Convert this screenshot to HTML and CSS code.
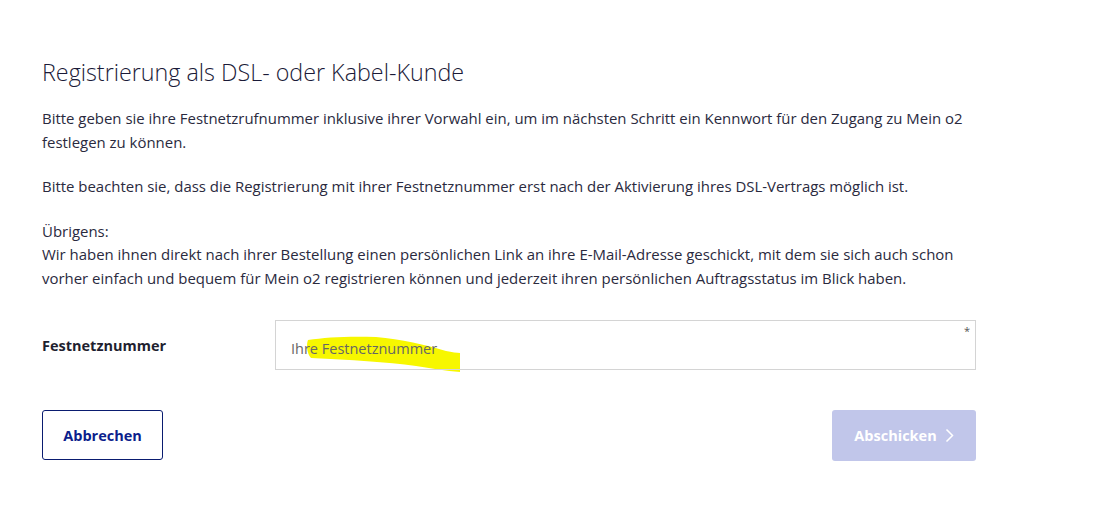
FILE: index.html
```html
<!DOCTYPE html>
<html lang="de">
<head>
<meta charset="utf-8">
<title>Registrierung</title>
<link rel="stylesheet" href="styles.css">
</head>
<body>
<main class="page">
  <h1 class="title">Registrierung als DSL- oder Kabel-Kunde</h1>
  <p class="text">Bitte geben sie ihre Festnetzrufnummer inklusive ihrer Vorwahl ein, um im nächsten Schritt ein Kennwort für den Zugang zu Mein o2 festlegen zu können.</p>
  <p class="text">Bitte beachten sie, dass die Registrierung mit ihrer Festnetznummer erst nach der Aktivierung ihres DSL-Vertrags möglich ist.</p>
  <p class="text">Übrigens:<br>Wir haben ihnen direkt nach ihrer Bestellung einen persönlichen Link an ihre E-Mail-Adresse geschickt, mit dem sie sich auch schon vorher einfach und bequem für Mein o2 registrieren können und jederzeit ihren persönlichen Auftragsstatus im Blick haben.</p>

  <div class="field">
    <label class="label" for="nr">Festnetznummer</label>
    <div class="input-wrap">
      <svg class="marker" width="156" height="38" viewBox="0 0 156 38" aria-hidden="true">
        <path d="M2 5 C 20 2, 45 1, 70 2 C 95 4, 120 10, 140 16 C 146 17, 151 18, 154 18 L 154 37 C 140 36, 125 33, 110 31 C 80 27, 45 25, 5 23 C 1 19, 0 10, 2 5 Z" fill="#f7f700"/>
      </svg>
      <input class="input" id="nr" type="text" placeholder="Ihre Festnetznummer">
      <span class="req">*</span>
    </div>
  </div>

  <div class="actions">
    <button class="btn btn-outline" type="button">Abbrechen</button>
    <button class="btn btn-primary" type="button" disabled>Abschicken
      <svg class="chev" width="9" height="15" viewBox="0 0 9 15" aria-hidden="true"><path d="M1.5 1.5 L7.5 7.5 L1.5 13.5" fill="none" stroke="#ffffff" stroke-width="1.5"/></svg>
    </button>
  </div>
</main>
</body>
</html>
```

FILE: styles.css
```css
html, body {
  margin: 0;
  padding: 0;
  background: #ffffff;
}
body {
  font-family: "Open Sans", "Liberation Sans", sans-serif;
  color: #1f1f36;
}
.page {
  width: 934px;
  padding: 56px 0 0 42px;
}
.title {
  margin: 0 0 19px;
  font-size: 23.3px;
  font-weight: 300;
  line-height: 32px;
  color: #1a1a38;
}
.text {
  margin: 0 0 21px;
  font-size: 14.95px;
  line-height: 23.5px;
  font-weight: 400;
  color: #2a2a3e;
}
.field {
  display: flex;
  align-items: center;
  margin-top: 30px;
}
.label {
  width: 233px;
  font-size: 14.5px;
  font-weight: 700;
  color: #1f1f30;
}
.input-wrap {
  position: relative;
  flex: 1;
}
.input {
  display: block;
  box-sizing: border-box;
  width: 701px;
  height: 50px;
  border: 1px solid #d4d4d4;
  padding: 6px 15px 0;
  font-family: "Open Sans", "Liberation Sans", sans-serif;
  font-size: 14.5px;
  background: transparent;
  position: relative;
  z-index: 1;
  outline: none;
}
.input::placeholder {
  color: #666666;
}
.marker {
  position: absolute;
  left: 31px;
  top: 15px;
  z-index: 0;
}
.req {
  position: absolute;
  right: 6px;
  top: 3px;
  font-size: 11px;
  color: #555555;
  z-index: 2;
}
.actions {
  display: flex;
  justify-content: space-between;
  margin-top: 40px;
}
.btn {
  box-sizing: border-box;
  height: 50px;
  border-radius: 3px;
  font-family: "Open Sans", "Liberation Sans", sans-serif;
  font-size: 14.5px;
  font-weight: 700;
  display: flex;
  align-items: center;
  justify-content: center;
  gap: 8px;
}
.btn-outline {
  width: 121px;
  background: #ffffff;
  border: 1px solid #0a1c70;
  color: #0c1e8c;
}
.btn-primary {
  width: 144px;
  height: 51px;
  background: #c1c6ea;
  border: none;
  color: #ffffff;
}
.chev {
  display: block;
}
```
